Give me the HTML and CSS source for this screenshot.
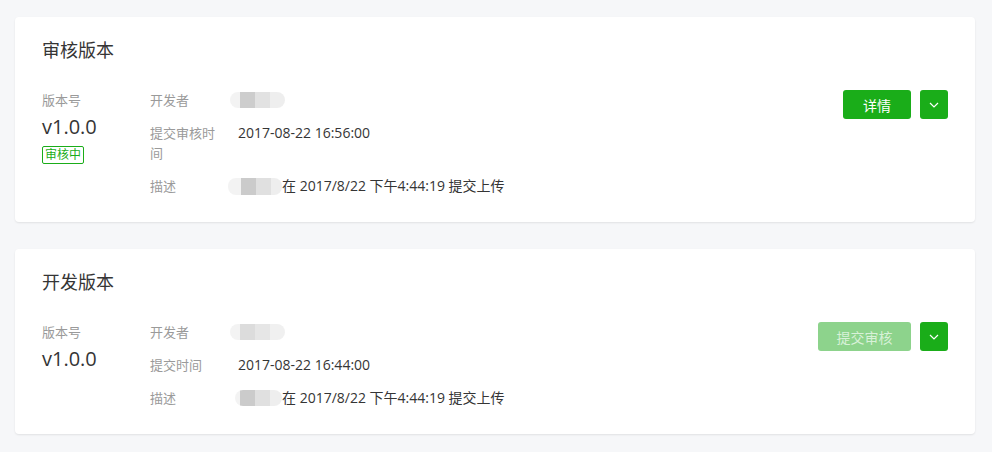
FILE: index.html
```html
<!DOCTYPE html>
<html lang="zh">
<head>
<meta charset="utf-8">
<link rel="stylesheet" href="styles.css">
</head>
<body>
<div class="page">
  <section class="card">
    <h2 class="card-title">审核版本</h2>
    <div class="card-body">
      <div class="ver">
        <div class="ver-label">版本号</div>
        <div class="ver-num">v1.0.0</div>
        <span class="tag">审核中</span>
      </div>
      <div class="info">
        <div class="row"><div class="lbl">开发者</div><div class="val"><span class="blur blur-a"></span></div></div>
        <div class="row"><div class="lbl">提交审核时间</div><div class="val">2017-08-22 16:56:00</div></div>
        <div class="row"><div class="lbl">描述</div><div class="val"><span class="blur blur-b"></span>在 2017/8/22 下午4:44:19 提交上传</div></div>
      </div>
      <div class="actions">
        <button class="btn btn-primary">详情</button>
        <button class="btn btn-drop"><svg width="10" height="6" viewBox="0 0 10 6"><path d="M1 1l4 4 4-4" fill="none" stroke="#fff" stroke-width="1.2"/></svg></button>
      </div>
    </div>
  </section>
  <section class="card">
    <h2 class="card-title">开发版本</h2>
    <div class="card-body">
      <div class="ver">
        <div class="ver-label">版本号</div>
        <div class="ver-num">v1.0.0</div>
      </div>
      <div class="info">
        <div class="row"><div class="lbl">开发者</div><div class="val"><span class="blur blur-c"></span></div></div>
        <div class="row"><div class="lbl">提交时间</div><div class="val">2017-08-22 16:44:00</div></div>
        <div class="row"><div class="lbl">描述</div><div class="val"><span class="blur blur-d"></span>在 2017/8/22 下午4:44:19 提交上传</div></div>
      </div>
      <div class="actions">
        <button class="btn btn-primary btn-disabled">提交审核</button>
        <button class="btn btn-drop"><svg width="10" height="6" viewBox="0 0 10 6"><path d="M1 1l4 4 4-4" fill="none" stroke="#fff" stroke-width="1.2"/></svg></button>
      </div>
    </div>
  </section>
</div>
</body>
</html>
```

FILE: styles.css
```css
* { box-sizing: border-box; }
html, body { margin: 0; padding: 0; }
body {
  background: #f6f7f9;
  font-family: "Open Sans", "Noto Sans CJK SC", sans-serif;
  color: #353535;
  width: 992px;
  height: 452px;
  overflow: hidden;
}
.page { padding: 17px 17px 0 15px; }
.card {
  background: #fff;
  border-radius: 4px;
  box-shadow: 0 1px 2px rgba(0, 0, 0, 0.09);
  padding: 21px 27px 26px;
  margin-bottom: 27px;
}
.card:last-child { margin-bottom: 0; }
.card-title {
  margin: 0 0 28px;
  font-size: 18px;
  line-height: 24px;
  font-weight: normal;
  color: #353535;
}
.card-body { display: flex; align-items: flex-start; }
.ver { width: 108px; flex: none; }
.ver-label { font-size: 13px; line-height: 20px; color: #9a9a9a; }
.ver-num { font-size: 20px; line-height: 30px; margin-top: 2px; color: #353535; }
.tag {
  display: inline-block;
  margin-top: 2px;
  border: 1px solid #1aad19;
  border-radius: 2px;
  color: #1aad19;
  font-size: 12px;
  line-height: 16px;
  padding: 0 2px;
}
.info { flex: 1; }
.row {
  display: grid;
  grid-template-columns: 76px 1fr;
  column-gap: 12px;
  margin-bottom: 13px;
  line-height: 20px;
}
.row:last-child { margin-bottom: 0; }
.lbl { font-size: 13px; color: #9a9a9a; }
.val { font-size: 14px; color: #353535; display: flex; align-items: flex-start; height: 20px; }
.blur {
  display: inline-block;
  height: 16px;
  margin-top: 2px;
  border-radius: 8px;
  margin-left: -8px;
}
.blur-a { width: 55px; background: linear-gradient(90deg, #f3f3f3 0 10px, #cdcdcd 10px 25px, #e2e2e2 25px 40px, #eeeeee 40px); }
.blur-b { width: 54px; margin-left: -10px; height: 17px; background: linear-gradient(90deg, #f3f3f3 0 13px, #cbcbcb 13px 28px, #e0e0e0 28px 43px, #eeeeee 43px); }
.blur-c { width: 55px; background: linear-gradient(90deg, #f3f3f3 0 10px, #dcdcdc 10px 25px, #e6e6e6 25px 40px, #f0f0f0 40px); }
.blur-d { width: 47px; margin-left: -3px; background: linear-gradient(90deg, #f3f3f3 0 5px, #cbcbcb 5px 20px, #e0e0e0 20px 35px, #eeeeee 35px); }
.actions { display: flex; gap: 9px; flex: none; }
.btn {
  height: 29px;
  border: 0;
  border-radius: 3px;
  background: #1aad19;
  color: #fff;
  font-family: inherit;
  font-size: 14px;
  padding: 0;
  cursor: pointer;
  display: flex;
  align-items: center;
  justify-content: center;
}
.btn-primary { width: 68px; }
.btn-disabled { width: 93px; background: #8dd38c; color: #d8f1d8; }
.btn-drop { width: 28px; }
```
